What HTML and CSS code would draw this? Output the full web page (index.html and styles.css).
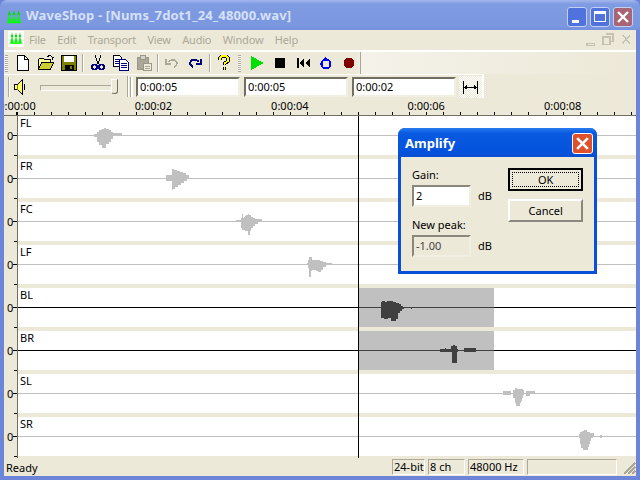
FILE: index.html
```html
<!DOCTYPE html>
<html>
  <head>
    <meta charset="UTF-8" />
    <title>WaveShop</title>
    <link rel="stylesheet" href="styles.css">
  </head>
  <body>
    <div class="window">
      <div class="titlebar">
        <svg class="appicon" viewBox="0 0 16 16"><use href="#crown" /></svg>
        <span class="titletext">WaveShop - [Nums_7dot1_24_48000.wav]</span>
        <div class="capbtn capmin"><i></i></div>
        <div class="capbtn capmax"><i></i></div>
        <div class="capbtn capclose">
          <svg viewBox="0 0 14 14"><path d="M2 2l10 10M12 2L2 12" /></svg>
        </div>
      </div>

      <div class="menubar">
        <div class="menuicon">
          <svg viewBox="0 0 16 16">
            <defs>
              <g id="crown">
                <path d="M2.700 0l1.700 6H1z M8 0l1.700 6H6.300z M13.300 0L15 6h-3.400z" fill="#00dd00" />
                <path d="M2.700 4l2.700 11H0z M8 4l2.700 11H5.300z M13.300 4L16 15h-5.400z" fill="#00ff00" />
              </g>
            </defs>
            <use href="#crown" />
          </svg>
        </div>
        <span>File</span>
        <span>Edit</span>
        <span>Transport</span>
        <span>View</span>
        <span>Audio</span>
        <span>Window</span>
        <span>Help</span>
        <div class="mdibtns">
          <svg viewBox="0 0 48 14"><path d="M5 11h7v2H5z M20 5h7v7h-7z M23 2h7v7h-3 M39 3l7 8m0-8l-7 8" /></svg>
        </div>
      </div>

      <div class="band band1">
        <div class="grip"></div>
        <div class="tbtn"><svg viewBox="0 0 16 16"><path d="M2.500 .5h7l4 4v11h-11z" fill="#fff" stroke="#000" /><path d="M9.500 .5v4h4" fill="none" stroke="#000" /></svg></div>
        <div class="tbtn"><svg viewBox="0 0 16 16"><path d="M.5 14.500v-10l1-1h4l1 1h6v3" fill="#ffff99" stroke="#000" /><path d="M.5 14.500l3-7h12l-3 7z" fill="#cccc33" stroke="#000" /><path d="M9 1.500l3-1 3 2-1 2" fill="none" stroke="#000" /></svg></div>
        <div class="tbtn"><svg viewBox="0 0 16 16"><rect x=".5" y=".5" width="15" height="15" fill="#808000" stroke="#000" /><rect x="3" y="1" width="10" height="6" fill="#fff" /><rect x="3.500" y="10" width="9" height="5" fill="#000" /><rect x="9" y="11" width="2" height="3" fill="#808000" /></svg></div>
        <div class="tsep"></div>
        <div class="tbtn"><svg viewBox="0 0 16 16"><path d="M5 0l3 9M11 0L8 9" stroke="#000" fill="none" /><circle cx="4.500" cy="12" r="2.500" fill="none" stroke="#000080" stroke-width="1.600" /><circle cx="11.500" cy="12" r="2.500" fill="none" stroke="#000080" stroke-width="1.600" /></svg></div>
        <div class="tbtn"><svg viewBox="0 0 16 16"><path d="M.5 .5h6l2 2v9h-8z" fill="#fff" stroke="#000" /><path d="M2 4h5M2 6h5M2 8h5" stroke="#000080" /><path d="M6.500 4.500h6l3 3v8h-9z" fill="#fff" stroke="#000080" /><path d="M8 8h6M8 10h6M8 12h6" stroke="#000080" /></svg></div>
        <div class="tbtn"><svg viewBox="0 0 16 16"><path d="M1.500 2.500h11v12h-11z" fill="#aca899" stroke="#9a9788" /><rect x="4.500" y=".5" width="5" height="4" fill="#d6d3c4" stroke="#9a9788" /><path d="M7.500 8.500h8v7h-8z" fill="#ece9d8" stroke="#9a9788" /><path d="M9 11h5M9 13h5" stroke="#aca899" /></svg></div>
        <div class="tsep tsep2"></div>
        <div class="tbtn"><svg viewBox="0 0 16 16"><path d="M4 7c3-3 8-3 9 1 0 2-1 3-3 4M2 4v5h5" fill="none" stroke="#aca899" stroke-width="1.500" /></svg></div>
        <div class="tbtn"><svg viewBox="0 0 16 16"><path d="M12 7C9 4 4 4 3 8c0 2 1 3 3 4M14 4v5H9" fill="none" stroke="#000080" stroke-width="2" /></svg></div>
        <div class="tsep tsep3"></div>
        <div class="tbtn"><svg viewBox="0 0 16 16"><path d="M4 5V3l2-2h4l2 2v3L8.500 8.500V10M8.500 12v2.500" fill="none" stroke="#000" stroke-width="3.600" /><path d="M4 5V3l2-2h4l2 2v3L8.500 8.500V10M8.500 12v2.500" fill="none" stroke="#ffff00" stroke-width="1.600" /></svg></div>
        <div class="grip grip2"></div>
        <div class="tbtn"><svg viewBox="0 0 16 16"><path d="M2 1l13 7-13 7z" fill="#00e000" /></svg></div>
        <div class="tbtn"><svg viewBox="0 0 16 16"><rect x="3" y="3" width="10" height="10" fill="#000" /></svg></div>
        <div class="tbtn"><svg viewBox="0 0 16 16"><path d="M2 3h2v10H2z M9 3v10L4 8z M15 3v10L10 8z" fill="#000" /></svg></div>
        <div class="tbtn"><svg viewBox="0 0 16 16"><circle cx="8" cy="9" r="4.500" fill="none" stroke="#0000ff" stroke-width="2.200" /><path d="M8 1l-3 4h3z" fill="#0000ff" /></svg></div>
        <div class="tbtn"><svg viewBox="0 0 16 16"><circle cx="8" cy="8" r="5.500" fill="#800000" /></svg></div>
        <div class="bandend"></div>
      </div>

      <div class="bandrow">
        <div class="band band2">
          <div class="grip grip3"></div>
          <div class="speaker"><svg viewBox="0 0 16 18"><path d="M1.500 6.500h3l5-5v15l-5-5h-3z" fill="#ffff66" stroke="#000" /><path d="M4.500 6.500v5" stroke="#808000" /><path d="M11.500 6v6" stroke="#000" /></svg></div>
          <div class="slider"><div class="thumb"></div></div>
          <div class="vline"></div>
          <div class="grip grip4"></div>
          <div class="timebox">0:00:05</div>
          <div class="timebox">0:00:05</div>
          <div class="timebox">0:00:02</div>
          <div class="fitbtn"><svg viewBox="0 0 16 14"><path d="M1.500 1v12M14.500 1v12M2 7h12" stroke="#000" fill="none" /><path d="M2 7l3-2.500v5z M14 7l-3-2.500v5z" fill="#000" /></svg></div>
        </div>
      </div>

      <div class="ruler">
        <div class="labels">
          <span>0:00:00</span>
          <span>0:00:02</span>
          <span>0:00:04</span>
          <span>0:00:06</span>
          <span>0:00:08</span>
        </div>
        <div class="ticks"></div>
      </div>

      <div class="tracks">
        <div class="track">
          <div class="axis">0</div>
          <div class="canvas">
            <span class="chname">FL</span>
            <svg class="wave" viewBox="18 -19 618 39"><rect class="midline" x="18" y="0" width="618" height="1" /><path class="blob" d="M95-1h2v-2h2v-2h3v-1h2v-1h2v1h3v1h2v2h2v1h9v3h-9v3h-2v3h-2v2h-3v4h-4v-3h-3v-3h-2v-5h-3v-3h-1z" /></svg>
          </div>
        </div>
        <div class="track">
          <div class="axis">0</div>
          <div class="canvas">
            <span class="chname">FR</span>
            <svg class="wave" viewBox="18 -19 618 39"><rect class="midline" x="18" y="0" width="618" height="1" /><path class="blob" d="M166-3h6v-6h2v1h3v1h3v1h3v1h3v2h3v4h-2v2h-3v2h-3v2h-3v2h-3v2h-2v1h-1v-9h-6z" /></svg>
          </div>
        </div>
        <div class="track">
          <div class="axis">0</div>
          <div class="canvas">
            <span class="chname">FC</span>
            <svg class="wave" viewBox="18 -19 618 39"><rect class="midline" x="18" y="0" width="618" height="1" /><path class="blob" d="M236-1h5v-2h1v-4h1v4h1v-1h1v-1h1v-1h2v-1h1v1h2v2h2v1h2v1h7v3h-4v2h-3v2h-2v2h-2v3h-1v4h-2v-4h-3v-1h-3v-2h-1v-6h-5z" /></svg>
          </div>
        </div>
        <div class="track">
          <div class="axis">0</div>
          <div class="canvas">
            <span class="chname">LF</span>
            <svg class="wave" viewBox="18 -19 618 39"><rect class="midline" x="18" y="0" width="618" height="1" /><path class="blob" d="M307-1h1v-3h1v-3h3v3h8v1h3v1h3v1h6v2h-6v2h-3v3h-2v2h-3v-1h-2v-1h-4v1h-1v6h-2v-9h-1v-3h-1z" /></svg>
          </div>
        </div>
        <div class="track">
          <div class="axis">0</div>
          <div class="canvas">
            <span class="chname">BL</span>
            <svg class="wave" viewBox="18 -19 618 39"><rect class="selrect" x="359" y="-19" width="135" height="39" /><rect class="midline dark" x="18" y="0" width="618" height="1" /><rect class="midline sel" x="359" y="0" width="135" height="1" /><path class="blob sel" d="M381-5h1v-1h3v1h2v-1h6v1h3v1h3v1h2v2h2v1h1v2h-2v2h-2v2h-2v6h-2v2h-5v-3h-3v1h-4v-1h-3z M411 0h1v2h-1z" /></svg>
          </div>
        </div>
        <div class="track">
          <div class="axis">0</div>
          <div class="canvas">
            <span class="chname">BR</span>
            <svg class="wave" viewBox="18 -19 618 39"><rect class="selrect" x="359" y="-19" width="135" height="39" /><rect class="midline dark" x="18" y="0" width="618" height="1" /><rect class="midline sel" x="359" y="0" width="135" height="1" /><path class="blob sel" d="M440-1h5v-1h1v1h5v-3h2v-1h2v1h2v3h1v3h-1v11h-5v-11h-12z M464-2h12v4h-12z" /></svg>
          </div>
        </div>
        <div class="track">
          <div class="axis">0</div>
          <div class="canvas">
            <span class="chname">SL</span>
            <svg class="wave" viewBox="18 -19 618 39"><rect class="midline" x="18" y="0" width="618" height="1" /><path class="blob" d="M503-2h8v4h-8z M513-3h2v-2h2v1h6v1h1v5h-1v3h-1v3h-1v2h-1v3h-4v-3h-1v-5h-2z M526-2h9v3h-5v2h-4z" /></svg>
          </div>
        </div>
        <div class="track">
          <div class="axis">0</div>
          <div class="canvas">
            <span class="chname">SR</span>
            <svg class="wave" viewBox="18 -19 618 39"><rect class="midline" x="18" y="0" width="618" height="1" /><path class="blob" d="M579-2h1v-2h2v-1h2v-1h3v2h3v1h4v3h-1v2h-2v3h-1v3h-1v3h-1v3h-5v-2h-2v-4h-1v-6h-1z M600-1h2v3h-2z" /></svg>
          </div>
        </div>
        <div class="cursor"></div>
      </div>

      <div class="statusbar">
        <span class="ready">Ready</span>
        <span class="panel p1">24-bit</span>
        <span class="panel p2">8 ch</span>
        <span class="panel p3">48000 Hz</span>
        <span class="panel p4"></span>
        <svg class="sizegrip" viewBox="0 0 14 14"><path d="M13 2L2 13M13 6l-7 7M13 10l-3 3" stroke="#aca899" stroke-width="1.500" /></svg>
      </div>
    </div>

    <div class="dialog">
      <div class="dlgtitle">
        <span>Amplify</span>
        <div class="dlgclose">
          <svg viewBox="0 0 14 14"><path d="M2 2l10 10M12 2L2 12" /></svg>
        </div>
      </div>
      <div class="dlgbody">
        <div class="fields">
          <label>Gain:</label>
          <div class="fieldrow">
            <div class="dlgedit">2</div>
            <span>dB</span>
          </div>
          <label>New peak:</label>
          <div class="fieldrow">
            <div class="dlgedit readonly">-1.00</div>
            <span>dB</span>
          </div>
        </div>
        <div class="dlgbtns">
          <div class="btn default"><span>OK</span></div>
          <div class="btn">Cancel</div>
        </div>
      </div>
    </div>
  </body>
</html>
```

FILE: styles.css
```css
* {
  box-sizing: border-box;
}

html,
body {
  margin: 0;
  width: 640px;
  height: 480px;
  overflow: hidden;
}

body {
  position: relative;
  font-family: "Noto Sans", "Liberation Sans", sans-serif;
  font-size: 11px;
  color: #000;
}

svg {
  display: block;
  shape-rendering: crispEdges;
}

.window {
  width: 640px;
  height: 480px;
  display: flex;
  flex-direction: column;
  padding: 0 4px 4px;
  background: #6d85d8;
}

/* title bar */
.titlebar {
  height: 30px;
  margin: 0 -4px;
  padding: 3px 7px 0 7px;
  display: flex;
  align-items: center;
  background: linear-gradient(#a3b7ee 0, #7f9be2 4px, #7a97df 26px, #7590dc 100%);
  border-radius: 7px 7px 0 0;
}

.appicon {
  width: 14px;
  height: 14px;
  margin-right: 5px;
  shape-rendering: auto;
}

.titletext {
  flex: 1;
  margin-top: -3px;
  font-size: 13px;
  font-weight: bold;
  letter-spacing: 0.15px;
  color: #d6e0f8;
  white-space: nowrap;
}

.capbtn {
  position: relative;
  width: 20px;
  height: 20px;
  margin-left: 3px;
  border: 1px solid #c3d0f4;
  border-radius: 3px;
  background: #4f72dc;
}

.capmin i {
  position: absolute;
  left: 4px;
  bottom: 3px;
  width: 7px;
  height: 3px;
  background: #fff;
}

.capmax i {
  position: absolute;
  left: 3px;
  top: 3px;
  width: 12px;
  height: 11px;
  border: 1px solid #fff;
  border-top-width: 3px;
}

.capclose {
  background: #a86472;
  padding: 2px;
}

.capclose path,
.dlgclose path {
  stroke: #fff;
  stroke-width: 2.4;
  fill: none;
  shape-rendering: auto;
}

/* menu */
.menubar {
  height: 22px;
  display: flex;
  align-items: center;
  padding-bottom: 2px;
  background: #ece9d8;
  border-bottom: 2px solid #aca899;
  border-image: linear-gradient(#aca899 50%, #fff 50%) 2;
  color: #aca899;
  letter-spacing: -0.2px;
}

.menubar span {
  margin-right: 11.500px;
}

.menuicon {
  width: 16px;
  height: 16px;
  margin: 0 5px 0 4px;
  padding: 1px 2px;
  background: #fff;
}

.menuicon svg {
  width: 12px;
  height: 13px;
  shape-rendering: auto;
}

.mdibtns {
  margin-left: auto;
  width: 54px;
  padding-right: 4px;
}

.mdibtns path {
  fill: none;
  stroke: #c4c2b3;
  stroke-width: 1.500;
}

/* toolbars */
.band {
  display: flex;
  align-items: center;
}

.band1 {
  height: 22px;
  background: linear-gradient(90deg, #ece9d8 0, #ece9d8 352px, #f4f2e9 358px, #ece9d8 620px);
  padding-left: 1px;
}

.bandrow {
  height: 24px;
  background: #ece9d8;
}

.band2 {
  height: 24px;
  width: 480px;
  border-top: 1px solid #fff;
  border-right: 2px solid #fff;
  padding-left: 1px;
}

.grip {
  width: 3px;
  height: 17px;
  margin-right: 3px;
  background: repeating-linear-gradient(#aca899 0 1px, #fff 1px 2px);
}

.grip2 {
  margin: 0 4px 0 3px;
}

.grip3 {
  width: 2px;
  background: #aca899;
  border-right: 1px solid #fff;
  height: 20px;
  margin-left: 3px;
}

.grip4 {
  width: 3px;
  height: 20px;
  background: #fff;
  border-left: 1px solid #aca899;
  margin: 0 3px 0 1px;
}

.tbtn {
  width: 23px;
  height: 22px;
  padding: 3px 3.500px;
  flex-shrink: 0;
}

.tsep {
  width: 2px;
  height: 18px;
  margin: 0 2px 0 2px;
  background: #aca899;
  border-right: 1px solid #fff;
  flex-shrink: 0;
}

.tsep2 {
  margin: 0 1px 0 2px;
}

.tsep3 {
  margin: 0 1px 0 3px;
}

.bandend {
  width: 1px;
  height: 22px;
  background: #aca899;
}

.speaker {
  width: 16px;
  height: 18px;
}

.slider {
  position: relative;
  width: 80px;
  height: 18px;
  margin-left: 11px;
}

.slider::before {
  content: "";
  position: absolute;
  left: 0;
  right: 2px;
  top: 7px;
  height: 4px;
  background: #ece9d8;
  border: 1px solid;
  border-color: #aca899 #fff #fff #aca899;
}

.thumb {
  position: absolute;
  right: 2px;
  top: 1px;
  width: 7px;
  height: 15px;
  background: #ece9d8;
  border: 1px solid;
  border-color: #fff #716f64 #716f64 #fff;
  border-radius: 0 0 3px 3px;
}

.vline {
  width: 2px;
  height: 21px;
  margin-left: 7px;
  background: #aca899;
  border-right: 1px solid #fff;
}

.timebox {
  width: 104px;
  height: 20px;
  margin-right: 4px;
  padding-left: 2px;
  line-height: 15px;
  font-size: 11px;
  background: #fff;
  border: 2px solid;
  border-color: #716f64 #f1efe2 #f1efe2 #716f64;
  white-space: nowrap;
}

.fitbtn {
  width: 23px;
  height: 22px;
  margin-left: -1px;
  padding: 4px 3px;
  background: repeating-conic-gradient(#fff 0 25%, #ece9d8 0 50%) 0 0 / 2px 2px;
}

/* ruler */
.ruler {
  height: 17px;
  flex-shrink: 0;
  overflow: hidden;
  background: #ece9d8;
}

.labels {
  display: flex;
  margin-left: -55.200px;
  line-height: 15px;
}

.labels span {
  width: 136.400px;
  flex-shrink: 0;
  text-align: center;
}

.ticks {
  height: 3px;
  margin-top: -1px;
  background-image: repeating-linear-gradient(90deg, #000 0 1px, transparent 1px 17.050px);
  background-position: 13px 0;
}

/* tracks */
.tracks {
  position: relative;
  flex: 1;
  overflow: hidden;
  border-top: 1px solid #716f64;
  background: #ece9d8;
}

.track {
  display: flex;
  height: 43px;
}

.axis {
  position: relative;
  width: 14px;
  flex-shrink: 0;
  padding: 12px 0 0 3px;
  line-height: 15px;
  border-right: 1px solid #716f64;
}

.axis::before {
  content: "";
  position: absolute;
  right: 0;
  top: 19px;
  width: 4px;
  height: 1px;
  background: #000;
}

.axis::after {
  content: "";
  position: absolute;
  right: 0;
  top: 39px;
  width: 3px;
  height: 1px;
  background: #000;
}

.canvas {
  position: relative;
  flex: 1;
  height: 39px;
  background: #fff;
}

.chname {
  position: absolute;
  left: 2px;
  top: -1px;
  line-height: 15px;
}

.wave {
  width: 618px;
  height: 39px;
}

.midline {
  fill: #c0c0c0;
}

.midline.dark {
  fill: #000;
}

.midline.sel,
.blob.sel {
  fill: #404040;
}

.blob {
  fill: #c0c0c0;
}

.selrect {
  fill: #c0c0c0;
}

.cursor {
  position: absolute;
  left: 354px;
  top: 0;
  bottom: 0;
  width: 1px;
  background: #000;
}

/* status bar */
.statusbar {
  height: 18px;
  flex-shrink: 0;
  display: flex;
  align-items: flex-end;
  gap: 3px;
  padding-bottom: 1px;
  background: #ece9d8;
}

.ready {
  margin: 0 auto 0 2px;
  line-height: 15px;
}

.panel {
  height: 16px;
  line-height: 14px;
  padding-left: 1px;
  border: 1px solid;
  border-color: #aca899 #fff #fff #aca899;
}

.p1 {
  width: 33px;
}

.p2 {
  width: 37px;
}

.p3 {
  width: 56px;
}

.p4 {
  width: 90px;
}

.sizegrip {
  width: 14px;
  height: 14px;
  margin-left: 2px;
}

/* dialog */
.dialog {
  position: absolute;
  left: 398px;
  top: 128px;
  width: 199px;
  height: 146px;
  display: flex;
  flex-direction: column;
  padding: 0 3px 3px;
  background: #0a4fd8;
  border-radius: 7px 7px 0 0;
}

.dlgtitle {
  height: 29px;
  margin: 0 -3px;
  padding: 5px 4px 0 7px;
  display: flex;
  justify-content: space-between;
  background: linear-gradient(#2a7cf0 0, #0a5ae0 5px, #0352dc 24px, #0a4fd0 100%);
  border-radius: 7px 7px 0 0;
  color: #fff;
  font-size: 13px;
  font-weight: bold;
  line-height: 20px;
}

.dlgclose {
  width: 21px;
  height: 21px;
  padding: 2px;
  border: 1px solid #fff;
  border-radius: 3px;
  background: #e0502a;
}

.dlgbody {
  flex: 1;
  display: flex;
  padding: 11px 11px 0;
  background: #ece9d8;
}

.fields {
  width: 97px;
  line-height: 14px;
}

.fields label {
  display: block;
}

.fieldrow {
  display: flex;
  align-items: center;
  gap: 7px;
  margin: 3px 0 11px;
}

.dlgedit {
  width: 59px;
  height: 22px;
  padding-left: 2px;
  line-height: 18px;
  background: #fff;
  border: 2px solid;
  border-color: #8a887c #f1efe2 #f1efe2 #8a887c;
}

.dlgedit.readonly {
  background: #ece9d8;
  color: #444;
}

.dlgbtns {
  width: 75px;
  display: flex;
  flex-direction: column;
  gap: 8px;
}

.btn {
  height: 23px;
  line-height: 19px;
  text-align: center;
  border: 2px solid;
  border-color: #fff #8a887c #8a887c #fff;
}

.btn.default {
  padding: 2px;
  line-height: 13px;
  border-color: #000;
}

.btn.default span {
  display: block;
  height: 15px;
  border: 1px dotted #000;
}
```
